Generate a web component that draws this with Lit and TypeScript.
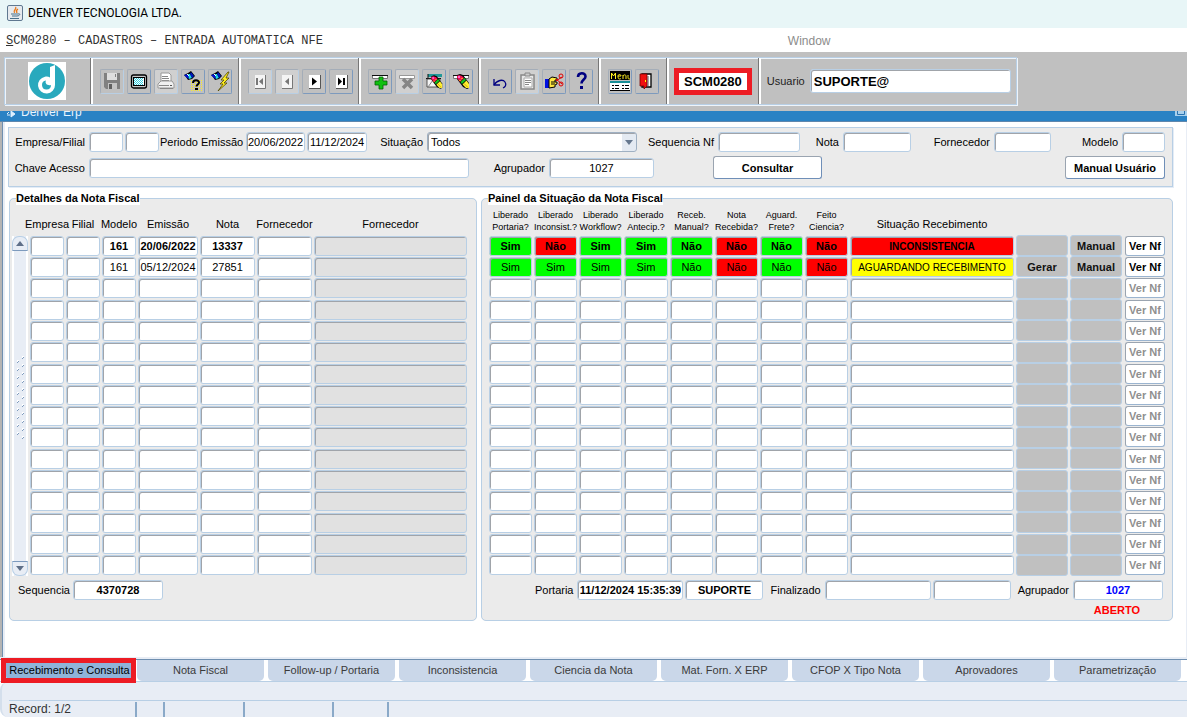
import { LitElement, html, css, svg, nothing, TemplateResult } from "lit";
import { customElement, state } from "lit/decorators.js";
import { classMap } from "lit/directives/class-map.js";

type Icon = { name: string; art: TemplateResult; off?: boolean; plain?: boolean };

const pencil = svg`
  <path d="M6 3l3-1 3 1 6 8v5l-2 1-4-2-6-8z" fill="#000"/>
  <path d="M6 4l2-1 3 1 2 2-4 4-3-4z" fill="#f01050"/>
  <path d="M7 4h2v2H7z" fill="#ff60d0"/>
  <path d="M8 8h2v1H8zM10 6h2v1h-2z" fill="#ff9020"/>
  <path d="M9.500 10l4-4 1.500 2-4 4z" fill="#10c020"/>
  <path d="M11.500 12.500l4-4 2.500 3.500v4l-3 0z" fill="#fff030"/>
  <path d="M13 11.500l4 4" stroke="#c89800" stroke-width=".8"/>`;

const torch = svg`
  <path d="M1 4l4-2 3-2 4 5-3 3-4 1-2-3z" fill="#000"/>
  <path d="M1 4l4-1 1 5-2-1z" fill="#0010d0"/>
  <path d="M5 3l2 0 2 4-3 1z" fill="#20d8e8"/>
  <path d="M8 1l3 4-2 2-2-4z" fill="#0018c0"/>
  <path d="M4 3l2 2" stroke="#fff" stroke-width="1"/>`;

const groups: Icon[][] = [
  [
    {
      name: "Salvar", off: true, plain: true,
      art: svg`<path d="M2 2h16v16H4l-2-2z" fill="#808080"/><path d="M5 2h10v7H5z" fill="#dedede"/><path d="M13 3h1v3h-1z" fill="#808080"/><path d="M6 12h9v6H6z" fill="#c4c4c4"/><path d="M7 13h3v5H7z" fill="#606060"/>`,
    },
    {
      name: "Tela",
      art: svg`<rect x="2.500" y="4" width="15" height="13" rx="2" fill="#c8c8c8" stroke="#000" stroke-width="1.300"/><rect x="4.500" y="6.500" width="11" height="8" fill="#fff" stroke="#000"/><path d="M5 7.500h10M5 9.500h10M5 11.500h10M5 13.500h10" stroke="#30d0e0" stroke-dasharray="1 1"/><path d="M6 8.500h8M6 10.500h8M6 12.500h8" stroke="#30d0e0" stroke-dasharray="1 1"/>`,
    },
    {
      name: "Imprimir", off: true,
      art: svg`<path d="M5 2h8l2 2v7H5z" fill="#fff" stroke="#999"/><path d="M6 5.500h6M6 7.500h7M6 9.500h7" stroke="#888"/><path d="M2 13l3-3h11l2 3v4H2z" fill="#f0f0f0" stroke="#999"/><path d="M3 14.500h10M4 17.500h13" stroke="#888"/><path d="M14 14h2v1h-2z" fill="#555"/>`,
    },
    {
      name: "Entrar consulta",
      art: svg`<path d="M8 9.500h12M8 11.500h12M8 13.500h12M8 15.500h12M8 17.500h12M8 19.500h12" stroke="#ffee20" stroke-dasharray="1 1"/>${torch}<path d="M10 12c0-3.500 6-3.500 6-.5 0 2-2.500 2-2.500 4M12 18h3" fill="none" stroke="#000" stroke-width="2"/>`,
    },
    {
      name: "Executar consulta",
      art: svg`${torch}<path d="M18 1l-7 8 3 0-4 4 3 0-5 7 9-8-3 0 5-5-3 0 3-6z" fill="#ffee20" stroke="#504800" stroke-width=".8"/>`,
    },
  ],
  [
    { name: "Primeiro registro", off: true, art: svg`<path d="M5 4h10v13H5z" fill="#f4f4f4"/><path d="M15.500 4v13.500H5" fill="none" stroke="#777"/><path d="M6 7h2v7H6zM13 7v7l-4-3.500z" fill="#777"/>` },
    { name: "Registro anterior", off: true, art: svg`<path d="M5 4h10v13H5z" fill="#f4f4f4"/><path d="M15.500 4v13.500H5" fill="none" stroke="#777"/><path d="M12 7v7l-4-3.500z" fill="#777"/>` },
    { name: "Próximo registro", art: svg`<path d="M5 4h11v13H5z" fill="#fff"/><path d="M16.500 4v13.500H5" fill="none" stroke="#555"/><path d="M8 6.500v8l5-4z" fill="#000"/>` },
    { name: "Último registro", art: svg`<path d="M5 4h11v13H5z" fill="#fff"/><path d="M16.500 4v13.500H5" fill="none" stroke="#555"/><path d="M7 6.500v8l4-4zM12 7h2v7h-2z" fill="#000"/>` },
  ],
  [
    { name: "Inserir registro", art: svg`<path d="M2.500 4.500h15v3h-15z" fill="#fff" stroke="#777"/><path d="M2 4.500h16" stroke="#111"/><path d="M9 6h4v4h4v4h-4v4H9v-4H5v-4h4z" fill="#10c010" stroke="#056005" stroke-width=".8"/>` },
    { name: "Remover registro", off: true, art: svg`<path d="M2.500 4.500h15v3h-15z" fill="#fff" stroke="#999"/><path d="M6 8l9 9M15 8l-9 9" stroke="#858585" stroke-width="3.500"/>` },
    { name: "Limpar bloco", art: svg`<path d="M4 3h14v3H4z" fill="#209898"/><path d="M2 7.500h15M4 3v12" stroke="#111"/><path d="M3 8h13v8H3z" fill="#f4f4f4" stroke="#333" stroke-width=".8"/><path d="M4 16l5-7" stroke="#888"/><g transform="translate(2 2.500) scale(.9)">${pencil}</g>` },
    { name: "Limpar registro", art: svg`<path d="M2.500 4.500h15v3h-15z" fill="#fff" stroke="#777"/><path d="M2 4.500h16" stroke="#111"/><g transform="translate(0 1)">${pencil}</g>` },
  ],
  [
    { name: "Desfazer", art: svg`<path d="M4 8v6h6" fill="none" stroke="#000080" stroke-width="1.300"/><path d="M4 14c3-5 9-6 11-3 2 3 0 5-2 6" fill="none" stroke="#000080" stroke-width="1.300"/>` },
    { name: "Lista de valores", off: true, art: svg`<path d="M4 4h13v14H4z" fill="#e8e8e8" stroke="#888" stroke-width="1.500"/><path d="M7 7h8v9H7z" fill="#fff" stroke="#aaa"/><path d="M8 2h5v3H8z" fill="#ccc" stroke="#888"/><path d="M8 9.500h6M8 11.500h6M8 13.500h4" stroke="#888"/>` },
    { name: "Recortar", art: svg`<path d="M1 8h4v9H1z" fill="#0010e0"/><path d="M5 8l3-2 5 1v2h-2v2h2v2l-2 1v2l-6 1z" fill="#ffe840" stroke="#000"/><path d="M7 11h4M7 13h4" stroke="#000" fill="none"/><path d="M12 10l6-4M12 8l6 5" stroke="#e00000"/><circle cx="17" cy="5" r="2" fill="none" stroke="#e00000"/><circle cx="17" cy="13" r="2" fill="none" stroke="#e00000"/>` },
    { name: "Ajuda", art: svg`<path d="M7 6c0-5 7.500-5 7.500-.5 0 3-4 3-4 7" fill="none" stroke="#000080" stroke-width="2.600"/><path d="M9 15h3v3H9z" fill="#000080"/>` },
  ],
  [
    {
      name: "Menu",
      art: svg`<path d="M0 0h20v9H0z" fill="#000"/><path d="M1.500 8V2l2 3 2-3v6M11 5H8c0 4 2 3 3 2.500M8 5c0-2 3-2 3 0M13 8V4M13 5c1-2 3-1 3 0v3M18 4c0 4 0 4 2 4" fill="none" stroke="#fff020"/><path d="M0 10h20v10H0z" fill="#fff"/><path d="M0 10h20v2H0z" fill="#1a9098"/><path d="M2 14.500h2m1 0h4m3 0h2m1 0h4M2 17.500h2m1 0h4m3 0h2m1 0h4" stroke="#000"/><path d="M0 19.500h20" stroke="#000"/>`,
    },
    { name: "Sair", art: svg`<path d="M5 3h9v13H5z" fill="#fff" stroke="#000" stroke-width="1.300"/><path d="M11 5v10" stroke="#aaa" stroke-width="2"/><path d="M3 3h7v12l-3 3v-3H3z" fill="#f01010" stroke="#700" stroke-width=".8"/><path d="M8 9h1v2H8z" fill="#ff0"/>` },
  ],
];

const leftColumns = ["Empresa", "Filial", "Modelo", "Emissão", "Nota", "Fornecedor", "Fornecedor"];
const rightColumns = [
  ["Liberado", "Portaria?"], ["Liberado", "Inconsist.?"], ["Liberado", "Workflow?"], ["Liberado", "Antecip.?"],
  ["Receb.", "Manual?"], ["Nota", "Recebida?"], ["Aguard.", "Frete?"], ["Feito", "Ciencia?"],
];

type Row = {
  details: string[];
  flags: [string, "ok" | "bad"][];
  status: [string, "bad" | "warn"];
  generate: string;
};

const records: Row[] = [
  {
    details: ["", "", "161", "20/06/2022", "13337", "", ""],
    flags: [["Sim", "ok"], ["Não", "bad"], ["Sim", "ok"], ["Sim", "ok"], ["Não", "ok"], ["Não", "bad"], ["Não", "ok"], ["Não", "bad"]],
    status: ["INCONSISTENCIA", "bad"],
    generate: "",
  },
  {
    details: ["", "", "161", "05/12/2024", "27851", "", ""],
    flags: [["Sim", "ok"], ["Sim", "ok"], ["Sim", "ok"], ["Sim", "ok"], ["Não", "ok"], ["Não", "bad"], ["Não", "ok"], ["Não", "bad"]],
    status: ["AGUARDANDO RECEBIMENTO", "warn"],
    generate: "Gerar",
  },
];

const tabs = [
  "Recebimento e Consulta", "Nota Fiscal", "Follow-up / Portaria", "Inconsistencia", "Ciencia da Nota",
  "Mat. Forn. X ERP", "CFOP X Tipo Nota", "Aprovadores", "Parametrização",
];

@customElement("app-root")
export class AppRoot extends LitElement {
  @state() private tab = 0;

  static styles = css`
    :host { display: block; font: 11px/14px "Liberation Sans", Arial, sans-serif; color: #000; background: #fff; }
    * { box-sizing: border-box; }
    button, input, select { font: inherit; color: inherit; margin: 0; padding: 0; min-width: 0; }
    .page { display: flex; flex-direction: column; min-height: 100vh; overflow: hidden; }

    .title { display: flex; align-items: center; gap: 5px; height: 28px; padding: 0 7px 3px; background: #e8f6f7; font: 12px/16px Roboto, "Open Sans", sans-serif; margin: 0; }
    .title svg { width: 16px; height: 16px; }
    .menu { display: grid; grid-template-columns: 662fr 338fr; height: 24px; padding: 2px 0 0 6px; align-items: center; }
    .menu a { color: #333; text-decoration: none; font: 12px/16px "Liberation Mono", "Courier New", monospace; }
    .menu .muted { color: #8c8c8c; font: 12px/16px "Liberation Sans", sans-serif; }

    .toolbar { background: #c0c0c0; padding: 5px 4px; height: 59px; }
    .tools { display: flex; width: max-content; height: 48px; border: 1px solid #b8cfe5; box-shadow: inset 1px 1px #eef4fa, 1px 1px #eef4fa; }
    .group { display: flex; align-items: center; gap: 3px; padding: 0 6px 0 7px; border-right: 2px solid #fff; box-shadow: inset -1px 0 #777; }
    .group.last { border: 0; box-shadow: none; padding: 0 5px 0 6px; gap: 5px; }
    .group.logo { padding: 0 25px 0 23px; }
    .group.g0 { padding: 0 7px; }
    .group.g4 { padding: 0 8px 0 7px; }
    .group.program { padding: 0 7px 0 5px; }
    .logo svg { width: 38px; height: 38px; }
    .tool { width: 24px; height: 25px; display: grid; place-items: center; background: none; border: 1px solid; border-color: #a4adb8 #7d9abd #7d9abd #a4adb8; border-radius: 2px; }
    .tool.off { background: #d0d0d0; border-color: #a4adb8 #b8cfe5 #b8cfe5 #a4adb8; }
    .tool.plain { background: none; }
    .tool svg { width: 20px; height: 20px; display: block; }
    .code { border: 5px solid #ed1c24; background: #fff; font: bold 13px/17px "Liberation Sans", sans-serif; padding: 0 5px; white-space: nowrap; }
    .user-label { color: #222; }

    .field { width: 100%; height: 20px; padding: 0 1px; border: 1px solid #b8cfe5; border-radius: 3px; background: #fff; box-shadow: inset 1px 1px #a0a4aa; outline: none; }
    .field.user { width: 201px; height: 24px; padding: 0 3px; font: bold 13px/17px "Liberation Sans", sans-serif; }
    .center { text-align: center; }
    .bold { font-weight: bold; }
    .blue { color: #0000ff; }

    .caption { display: flex; justify-content: space-between; height: 11px; overflow: hidden; background: #2a82c4; color: #e8f4ff; border-bottom: 1px solid #5f87ad; padding-left: 6px; }
    .caption h2 { display: flex; align-items: flex-start; gap: 5px; margin: -6px 0 0; font: 12px/15px "Liberation Sans", sans-serif; }
    .caption svg { width: 10px; height: 14px; }
    .restore { width: 12px; height: 5px; background: #a8d0ec; border: 0; padding: 0 2px; }
    .restore svg { width: 8px; height: 5px; display: block; }

    .work { flex: 1; background: linear-gradient(to right, #b4b4b4 2px, #6f8fb0 2px 3px, #e8edf5 3px 5px, #fff 5px); border-right: 1px solid #e8edf5; border-bottom: 2px solid #e8edf5; padding: 5px 13px 0 8px; }
    .filters { display: flex; flex-direction: column; gap: 4px; border: 1px solid #b8cfe5; background: #ebebeb; padding: 4px 6px 7px 0; height: 60px; box-shadow: 1px 1px #e4ecf6; }
    .line { display: grid; align-items: center; }
    .line .lab { text-align: right; padding-right: 3px; white-space: nowrap; }
    .line .cell { padding: 0 1px; display: grid; }
    .first { grid-template-columns: 79px 36px 36px 85px 61px 62px 58px minmax(90px, 1fr) 79px 84px 41px 70px 81px 59px 69px 45px; }
    .second { grid-template-columns: 79px minmax(90px, 1fr) 78px 107px 57px 111px 241px 102px; }
    .combo { appearance: none; padding-left: 3px; border-color: #9fb0c2; background: #fff url("data:image/svg+xml,%3Csvg xmlns='http://www.w3.org/2000/svg' width='14' height='18'%3E%3Cpath d='M0 0h14v18H0z' fill='%23e4eaf2'/%3E%3Cpath d='M3 7h8l-4 5z' fill='%2366788f'/%3E%3C/svg%3E") right center no-repeat; }
    .push { height: 23px; border: 1px solid; border-color: #9aa4b0 #6f8fb8 #6f8fb8 #9aa4b0; border-radius: 3px; background: #fff; font-weight: bold; white-space: nowrap; }

    .panels { display: grid; grid-template-columns: minmax(0, 468fr) minmax(0, 692fr); gap: 4px; margin-top: 4px; padding-left: 1px; }
    .panel { margin: 0; min-width: 0; border: 1px solid #b8cfe5; border-radius: 5px; background: #ebebeb; padding: 0 6px; height: 430px; }
    .panel legend { font-weight: bold; background: #fff; padding: 0; height: 14px; }
    .split { display: grid; grid-template-columns: 16px minmax(0, 1fr); gap: 1px; padding-right: 2px; margin-left: -4px; }
    table { width: 100%; height: 371px; table-layout: fixed; border-collapse: collapse; }
    thead th { height: 30px; font-weight: normal; padding: 0 0 4px; vertical-align: bottom; white-space: nowrap; text-align: center; }
    thead th span { display: inline-block; margin: 0 -6px; }
    thead th.tight { font-size: 9px; line-height: 12px; padding-bottom: 2px; }
    td { padding: 0 1px; line-height: 0; vertical-align: middle; }
    td .field, td button { display: block; line-height: 14px; }
    .c36 { width: 36px; } .c43 { width: 43px; } .c45 { width: 45px; } .c46 { width: 46px; } .c54 { width: 54px; } .c57 { width: 57px; } .c62 { width: 62px; }
    .flat { background: #e1e1e1; }
    .ok { background: #00ff00; } .bad { background: #ff0000; } .warn { background: #ffff00; }
    .field.situation { font-size: 10px; padding-top: 1px; }
    .grey { width: 100%; height: 21px; border: 1px solid #b8cfe5; border-radius: 3px; background: #c0c0c0; font-weight: bold; color: #111; }
    .view { width: 40px; height: 20px; border: 1px solid; border-color: #9aa4b0 #9ab4d0 #9ab4d0 #9aa4b0; border-radius: 3px; background: #fff; font-weight: bold; margin-left: auto; white-space: nowrap; }
    .view:disabled { color: #8f8f8f; }

    .scroll { display: flex; flex-direction: column; margin-top: 31px; height: 340px; background: #e8edf5; border: solid #fff; border-width: 0 2px; }
    .scroll button { height: 15px; border: 1px solid #b8cfe5; background: #e8edf5; display: grid; place-items: center; margin: 0 -2px; }
    .scroll svg { display: block; }
    .scroll .up { border-radius: 7px 7px 0 0; border-bottom-color: #7d9abd; }
    .scroll .down { border-radius: 0 0 7px 7px; border-top-color: #7d9abd; }
    .track { flex: 1; padding: 105px 0 0 1px; }

    .foot { display: flex; align-items: center; gap: 4px; margin-top: 4px; }
    .foot.start { padding-left: 2px; gap: 3px; }
    .foot.end { justify-content: flex-end; padding-right: 3px; }
    .foot.end .next { padding-left: 3px; }
    .w90 { width: 90px; } .w78 { width: 78px; } .w106 { width: 106px; }
    .pair { display: flex; gap: 2px; }
    .open { margin: 3px 0 0; padding-right: 26px; text-align: right; color: #ff0000; font-weight: bold; }

    .tabs { display: grid; grid-template-columns: repeat(9, minmax(0, 1fr)); gap: 4px; padding: 0 6px; height: 23px; border-top: 1px solid #6f8fb0; border-bottom: 1px solid #b8cfe5; background: #fff; }
    .tab { border: 0; padding-bottom: 2px; background: #cad7e9; color: #3a3a3a; border-radius: 0 0 5px 5px; white-space: nowrap; }
    .tab.active { background: #8fb4d9; color: #000; position: relative; }
    .tab.active::after { content: ""; position: absolute; inset: -2px -3px -2px -5px; border: 5px solid #ed1c24; }
    .status { height: 35px; background: #e8edf5; padding: 18px 0 0 9px; border-left: 2px solid #d4dfec; border-radius: 8px 0 0 8px; }
    .status .bar { display: flex; border-top: 1px solid #b8cfe5; margin-left: -2px; height: 17px; padding-top: 1px; color: #333; font-size: 12px; line-height: 15px; }
    .slot { border-right: 2px solid #8aa9c8; height: 15px; }
    .s128 { width: 128px; } .s28 { width: 28px; } .s80 { width: 80px; } .s89 { width: 89px; } .s55 { width: 55px; }
  `;

  private field(label: string, value = "", cls = "") {
    return html`<input class="field ${cls}" aria-label=${label} .value=${value} />`;
  }

  private detailsTable() {
    const widths = ["c36", "c36", "c36", "c62", "c57", "c57", ""];
    return html`<table>
      <colgroup>${widths.map((w) => html`<col class=${w} />`)}</colgroup>
      <thead><tr>${leftColumns.map((c) => html`<th scope="col"><span>${c}</span></th>`)}</tr></thead>
      <tbody>
        ${Array.from({ length: 16 }, (_, r) => html`<tr>
          ${leftColumns.map((c, i) => html`<td>
            ${this.field(`${c} ${r + 1}`, records[r]?.details[i], `center ${r === 0 ? "bold" : ""} ${i === 6 ? "flat" : ""}`)}
          </td>`)}
        </tr>`)}
      </tbody>
    </table>`;
  }

  private statusTable() {
    const widths = ["c45", "c45", "c45", "c46", "c45", "c45", "c45", "c45", "", "c54", "c54", "c43"];
    return html`<table>
      <colgroup>${widths.map((w) => html`<col class=${w} />`)}</colgroup>
      <thead><tr>
        ${rightColumns.map(([a, b]) => html`<th scope="col" class="tight"><span>${a}<br />${b}</span></th>`)}
        <th scope="col">Situação Recebimento</th><td></td><td></td><td></td>
      </tr></thead>
      <tbody>
        ${Array.from({ length: 16 }, (_, r) => {
          const row = records[r];
          const weight = r === 0 ? "bold" : "";
          return html`<tr>
            ${rightColumns.map(([a, b], i) => html`<td>
              ${this.field(`${a} ${b} ${r + 1}`, row?.flags[i][0], `center ${weight} ${row?.flags[i][1] ?? ""}`)}
            </td>`)}
            <td>${this.field(`Situação Recebimento ${r + 1}`, row?.status[0], `situation center ${weight} ${row?.status[1] ?? ""}`)}</td>
            <td><button class="grey" aria-label="Gerar">${row?.generate || nothing}</button></td>
            <td><button class="grey" aria-label="Manual">${row ? "Manual" : nothing}</button></td>
            <td><button class="view" ?disabled=${!row}>Ver Nf</button></td>
          </tr>`;
        })}
      </tbody>
    </table>`;
  }

  private grip() {
    return html`<svg width="10" height="84" aria-hidden="true">
      ${Array.from({ length: 21 }, (_, i) => {
        const x = i % 2 ? 2 : 7;
        const y = i * 4;
        return svg`<path d="M${x} ${y}h2v1h-1v1h-1z" fill="#fff"/><path d="M${x + 1} ${y + 1}h1v1h-1zM${x} ${y + 2}h1v1h-1z" fill="#7d9abd"/>`;
      })}
    </svg>`;
  }

  private input(id: string, value = "", cls = "") {
    return html`<div class="cell"><input id=${id} class="field ${cls}" .value=${value} /></div>`;
  }

  render() {
    return html`<div class="page">
      <h1 class="title">
        <svg viewBox="0 0 16 16" aria-hidden="true">
          <rect x=".5" y=".5" width="15" height="15" rx="1.500" fill="#e6eaee" stroke="#5f7890"/>
          <path d="M8.500 2c2 2-3 3-1 6M11 4c-2 1-2 2-1 4" fill="none" stroke="#e87818" stroke-width="1.300"/>
          <path d="M4 9h7M5 11h5M3 13.500h9M11 9c3-1 2 2-1 2" fill="none" stroke="#48708c"/>
        </svg>
        DENVER TECNOLOGIA LTDA.
      </h1>
      <nav class="menu">
        <a href="#"><u>S</u>CM0280 – CADASTROS – ENTRADA AUTOMATICA NFE</a>
        <a href="#" class="muted">Window</a>
      </nav>

      <div class="toolbar">
        <div class="tools">
          <div class="group logo">
            <svg viewBox="0 0 38 38" role="img" aria-label="Denver">
              <path d="M0 0h38v38H0z" fill="#fff"/><circle cx="19" cy="19" r="18" fill="#29a9bd"/>
              <path d="M22 5l5-2v20a8.500 8.500 0 1 1-10-8.300c2-.4 3.700 0 5 .8z" fill="#fff"/>
              <path d="M23 23a4.500 4.500 0 1 1-5-4.500c-1.500 3 1.500 5.500 5 4.500z" fill="#29a9bd"/>
            </svg>
          </div>
          ${groups.map((g, n) => html`<div class="group g${n}">
            ${g.map((i) => html`<button class=${classMap({ tool: true, off: !!i.off, plain: !!i.plain })} aria-label=${i.name}>
              <svg viewBox="0 0 20 20" fill="none" aria-hidden="true">${i.art}</svg>
            </button>`)}
          </div>`)}
          <div class="group program"><span class="code">SCM0280</span></div>
          <div class="group last">
            <label class="user-label" for="user">Usuario</label>
            <input id="user" class="field user" .value=${"SUPORTE@"} />
          </div>
        </div>
      </div>

      <div class="caption">
        <h2>
          <svg viewBox="0 0 10 14" aria-hidden="true"><path d="M0 6h10v8H0z" fill="#2a82c4"/><path d="M1 9l2-2M1 10h3M5 6v6l4-3z" stroke="#dff0ff" fill="#dff0ff"/></svg>
          Denver Erp
        </h2>
        <button class="restore" aria-label="Restaurar"><svg viewBox="0 0 8 5"><path d="M.5 0v3.500h7V0" fill="none" stroke="#2a72b0"/></svg></button>
      </div>

      <main class="work">
        <form class="filters" @submit=${(e: Event) => e.preventDefault()}>
          <div class="line first">
            <label class="lab" for="emp">Empresa/Filial</label>
            ${this.input("emp")}
            <div class="cell">${this.field("Filial")}</div>
            <label class="lab" for="from">Periodo Emissão</label>
            ${this.input("from", "20/06/2022", "center")}
            <div class="cell">${this.field("Periodo final", "11/12/2024", "center")}</div>
            <label class="lab" for="sit">Situação</label>
            <div class="cell"><select id="sit" class="field combo"><option>Todos</option></select></div>
            <label class="lab" for="seq">Sequencia Nf</label>${this.input("seq")}
            <label class="lab" for="nota">Nota</label>${this.input("nota")}
            <label class="lab" for="forn">Fornecedor</label>${this.input("forn")}
            <label class="lab" for="mod">Modelo</label>${this.input("mod")}
          </div>
          <div class="line second">
            <label class="lab" for="key">Chave Acesso</label>${this.input("key")}
            <label class="lab" for="agr">Agrupador</label>${this.input("agr", "1027", "center")}
            <span></span>
            <div class="cell"><button class="push">Consultar</button></div>
            <span></span>
            <div class="cell"><button type="button" class="push">Manual Usuário</button></div>
          </div>
        </form>

        <div class="panels">
          <fieldset class="panel">
            <legend>Detalhes da Nota Fiscal</legend>
            <div class="split">
              <div class="scroll">
                <button class="up" aria-label="Subir"><svg width="8" height="5"><path d="M0 5h8L4 0z" fill="#5f6f88"/></svg></button>
                <div class="track">${this.grip()}</div>
                <button class="down" aria-label="Descer"><svg width="8" height="5"><path d="M0 0h8L4 5z" fill="#5f6f88"/></svg></button>
              </div>
              ${this.detailsTable()}
            </div>
            <div class="foot start">
              <label for="rec">Sequencia</label>
              <input id="rec" class="field w90 center bold" .value=${"4370728"} />
            </div>
          </fieldset>
          <fieldset class="panel">
            <legend>Painel da Situação da Nota Fiscal</legend>
            ${this.statusTable()}
            <div class="foot end">
              <label for="gate">Portaria</label>
              <div class="pair">
                <input id="gate" class="field w106 center bold" .value=${"11/12/2024 15:35:39"} />
                ${this.field("Usuário da portaria", "SUPORTE", "w78 center bold")}
              </div>
              <label for="done" class="next">Finalizado</label>
              <div class="pair">
                <input id="done" class="field w106" />
                ${this.field("Usuário da finalização", "", "w78")}
              </div>
              <label for="grp" class="next">Agrupador</label>
              <input id="grp" class="field w90 center bold blue" .value=${"1027"} />
            </div>
            <p class="open">ABERTO</p>
          </fieldset>
        </div>
      </main>

      <nav class="tabs" role="tablist">
        ${tabs.map((t, i) => html`<button role="tab" class=${classMap({ tab: true, active: i === this.tab })}
          aria-selected=${i === this.tab} @click=${() => (this.tab = i)}>${t}</button>`)}
      </nav>
      <footer class="status">
        <div class="bar">
          <span class="slot s128">Record: 1/2</span><span class="slot s28"></span><span class="slot s80"></span>
          <span class="slot s89"></span><span class="slot s55"></span>
        </div>
      </footer>
    </div>`;
  }
}
